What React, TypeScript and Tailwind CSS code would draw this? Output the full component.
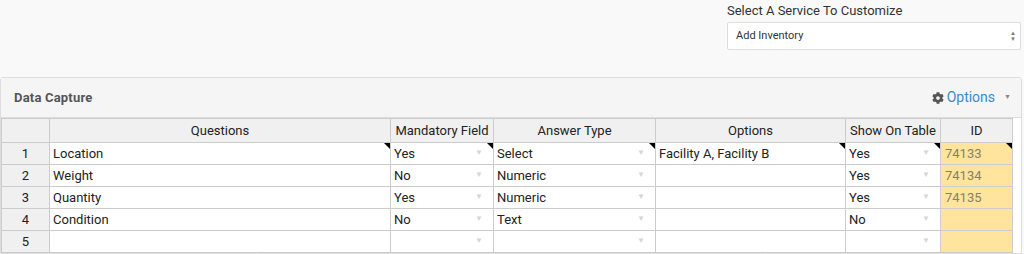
import { FaCog } from 'react-icons/fa';

const cols = [
  { label: 'Questions', w: 'w-[341px]' },
  { label: 'Mandatory Field', w: 'w-[103px]' },
  { label: 'Answer Type', w: 'w-[162px]' },
  { label: 'Options', w: 'w-[190px]' },
  { label: 'Show On Table', w: 'w-[95px]' },
  { label: 'ID', w: '' },
];

const rows = [
  { q: 'Location', m: 'Yes', a: 'Select', o: 'Facility A, Facility B', s: 'Yes', id: '74133', mark: true },
  { q: 'Weight', m: 'No', a: 'Numeric', o: '', s: 'Yes', id: '74134' },
  { q: 'Quantity', m: 'Yes', a: 'Numeric', o: '', s: 'Yes', id: '74135' },
  { q: 'Condition', m: 'No', a: 'Text', o: '', s: 'No', id: '' },
  { q: '', m: '', a: '', o: '', s: '', id: '' },
];

function Corner() {
  return (
    <span className="absolute right-0 top-0 h-0 w-0 border-l-[6px] border-t-[6px] border-l-transparent border-t-black" />
  );
}

function Cell({ text, dd, mark }: { text: string; dd?: boolean; mark?: boolean }) {
  return (
    <td className="relative h-[22px] overflow-hidden border border-[#ccc] bg-white px-[3px] py-0 text-left text-[13px] leading-[21px] text-[#222]">
      {text}
      {dd && <span className="absolute right-[10px] top-[6px] text-[8px] leading-none text-[#d6d6d6]">▼</span>}
      {mark && <Corner />}
    </td>
  );
}

export default function App() {
  return (
    <div className="h-[254px] w-[1024px] overflow-hidden bg-[#f9f9f9] font-['Roboto',sans-serif]">
      <div className="flex justify-end pr-[3px] pt-[3px]">
        <div className="w-[294px]">
          <div className="text-[13px] leading-[16px] text-[#333]">Select A Service To Customize</div>
          <div className="mt-[3px] flex h-[28px] items-center justify-between rounded-[2px] border border-[#ddd] bg-white pl-[8px] pr-[4px]">
            <span className="text-[11px] text-[#333]">Add Inventory</span>
            <span className="flex flex-col items-center text-[6px] leading-[6px] text-[#777]">
              <span>▲</span>
              <span>▼</span>
            </span>
          </div>
        </div>
      </div>

      <div className="mr-[2px] mt-[27px] rounded-t-[3px] border border-[#ddd] bg-white">
        <div className="flex h-[40px] items-center justify-between border-b border-[#ddd] bg-[#f5f5f5] pl-[13px] pr-[10px]">
          <span className="text-[13px] font-bold tracking-[0.2px] text-[#555]">Data Capture</span>
          <span className="flex items-center text-[14px] text-[#3b8ac9]">
            <FaCog className="mr-[3px] text-[12px] text-[#555]" />
            Options
            <span className="ml-[9px] text-[7px] text-[#888]">▼</span>
          </span>
        </div>
        <div className="w-[1012px]">
          <table className="w-full table-fixed border-collapse">
            <colgroup>
              <col className="w-[48px]" />
              {cols.map((c) => (
                <col key={c.label} className={c.w} />
              ))}
            </colgroup>
            <thead>
              <tr>
                <th className="h-[24px] border border-[#ccc] bg-[#f0f0f0] p-0" />
                {cols.map((c) => (
                  <th key={c.label} className="h-[24px] whitespace-nowrap border border-[#ccc] bg-[#f0f0f0] p-0 text-center text-[13px] font-normal text-[#222]">
                    {c.label}
                  </th>
                ))}
              </tr>
            </thead>
            <tbody>
              {rows.map((r, i) => (
                <tr key={i}>
                  <td className="h-[22px] border border-[#ccc] bg-[#f0f0f0] p-0 text-center text-[13px] text-[#222]">{i + 1}</td>
                  <Cell text={r.q} mark={r.mark} />
                  <Cell text={r.m} dd mark={r.mark} />
                  <Cell text={r.a} dd mark={r.mark} />
                  <Cell text={r.o} mark={r.mark} />
                  <Cell text={r.s} dd mark={r.mark} />
                  <td className="relative h-[22px] border border-[#ccc] bg-[#fee49c] px-[4px] py-0 text-[13px] text-[#8c7f66]">
                    {r.id}
                    {r.mark && <Corner />}
                  </td>
                </tr>
              ))}
            </tbody>
          </table>
        </div>
      </div>
    </div>
  );
}
